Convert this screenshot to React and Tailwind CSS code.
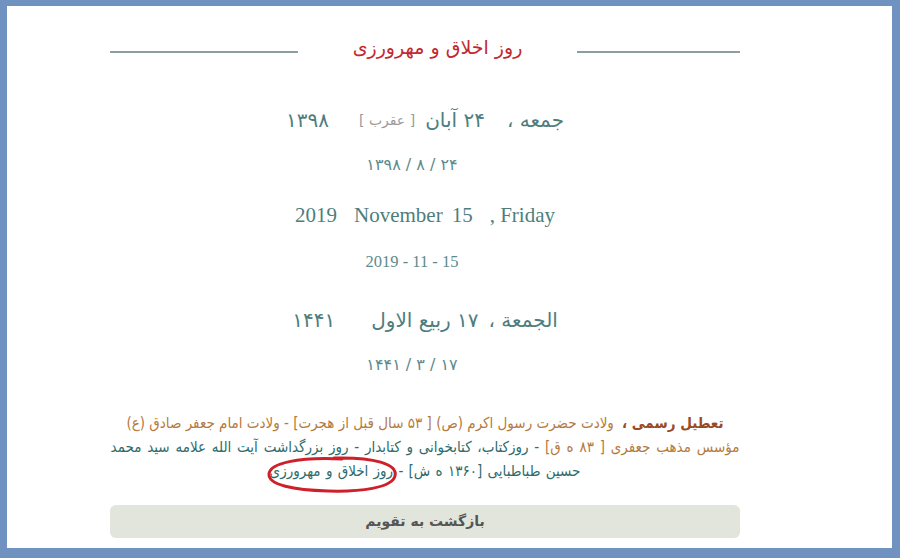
import React from "react";

const fa = { fontFamily: '"DejaVu Sans", "Noto Sans", sans-serif' };
const faNarrow = { fontFamily: '"DejaVu Sans Condensed", "DejaVu Sans", sans-serif' };
const serif = { fontFamily: '"Liberation Serif", "DejaVu Serif", serif' };

export default function App() {
  return (
    <div className="w-[900px] h-[558px] bg-white border-t-[6px] border-l-[7px] border-r-[8px] border-b-[10px] border-[#6f92c0] overflow-hidden">
      <div className="ml-[103px] w-[630px] flex flex-col">
        {/* title */}
        <div className="mt-[27px] h-[28px] flex items-center">
          <div className="w-[188px] h-[2px] bg-[#8d9ea3] mt-[10px]" />
          <div
            dir="rtl"
            className="flex-1 text-center text-[19px] leading-[28px] text-[#c4282f]"
            style={fa}
          >
            روز اخلاق و مهرورزی
          </div>
          <div className="w-[163px] h-[2px] bg-[#8d9ea3] mt-[10px]" />
        </div>

        {/* shamsi */}
        <div
          dir="rtl"
          className="mt-[44px] h-[30px] flex items-center justify-center text-[20px] leading-[30px] text-[#4e7d7e]"
          style={fa}
        >
          <span>جمعه ،</span>
          <span className="mr-[22px]">۲۴ آبان</span>
          <span className="mr-[10px] text-[14px] text-[#9a9a9a]">[ عقرب ]</span>
          <span className="mr-[30px]">۱۳۹۸</span>
        </div>
        <div
          dir="ltr"
          className="mt-[18px] h-[24px] pr-[26px] text-center text-[16px] leading-[24px] text-[#5e8a8b]"
          style={fa}
        >
          ۱۳۹۸ / ۸ / ۲۴
        </div>

        {/* gregorian */}
        <div
          className="mt-[23px] h-[30px] flex items-center justify-center text-[21px] leading-[30px] text-[#4e7d7e]"
          style={serif}
        >
          <span>2019</span>
          <span className="ml-[17px]">November</span>
          <span className="ml-[9px]">15</span>
          <span className="ml-[17px]">, Friday</span>
        </div>
        <div
          className="mt-[20px] h-[24px] pr-[26px] text-center text-[16.5px] leading-[24px] text-[#5e8a8b]"
          style={serif}
        >
          2019 - 11 - 15
        </div>

        {/* hijri */}
        <div
          dir="rtl"
          className="mt-[31px] h-[30px] flex items-center justify-center text-[20px] leading-[30px] text-[#4e7d7e]"
          style={fa}
        >
          <span>الجمعة ،</span>
          <span className="mr-[10px]">۱۷ ربیع الاول</span>
          <span className="mr-[36px]">۱۴۴۱</span>
        </div>
        <div
          dir="ltr"
          className="mt-[18px] h-[24px] pr-[26px] text-center text-[16px] leading-[24px] text-[#5e8a8b]"
          style={fa}
        >
          ۱۴۴۱ / ۳ / ۱۷
        </div>

        {/* holidays */}
        <div
          dir="rtl"
          className="relative mt-[34px] flex flex-col items-center text-[15px] leading-[24px] text-[#b57a3e] whitespace-nowrap"
          style={faNarrow}
        >
          <div>
            <span className="font-bold text-[#9b4a26]">تعطیل رسمی ،</span>
            <span className="mr-[8px]">
              ولادت حضرت رسول اکرم (ص) [ ۵۳ سال قبل از هجرت] - ولادت امام جعفر صادق (ع)
            </span>
          </div>
          <div className="tracking-[0.3px] [word-spacing:1.5px]">
            <span>مؤسس مذهب جعفری [ ۸۳ ه ق]</span>
            <span className="text-[#2f6b6b]"> - روزکتاب، کتابخوانی و کتابدار - روز بزرگداشت آیت الله علامه سید محمد</span>
          </div>
          <div className="text-[#2f6b6b] [word-spacing:1px]">
            حسین طباطبایی [۱۳۶۰ ه ش] - روز اخلاق و مهرورزی
          </div>
          <svg
            className="absolute left-[154px] top-[43px] w-[136px] h-[40px] pointer-events-none"
            viewBox="0 0 136 40"
            fill="none"
          >
            <path
              d="M70 4 C 110 3, 134 10, 131 22 C 128 34, 96 38, 64 37 C 30 36, 4 31, 5 20 C 6 9, 34 3, 78 5"
              stroke="#cf1f2a"
              strokeWidth="3"
              strokeLinecap="round"
            />
          </svg>
        </div>

        {/* back button */}
        <div
          dir="rtl"
          className="mt-[22px] h-[33px] rounded-[6px] bg-[#e1e5dc] flex items-center justify-center text-[14px] font-bold text-[#555]"
          style={fa}
        >
          بازگشت به تقویم
        </div>
      </div>
    </div>
  );
}
